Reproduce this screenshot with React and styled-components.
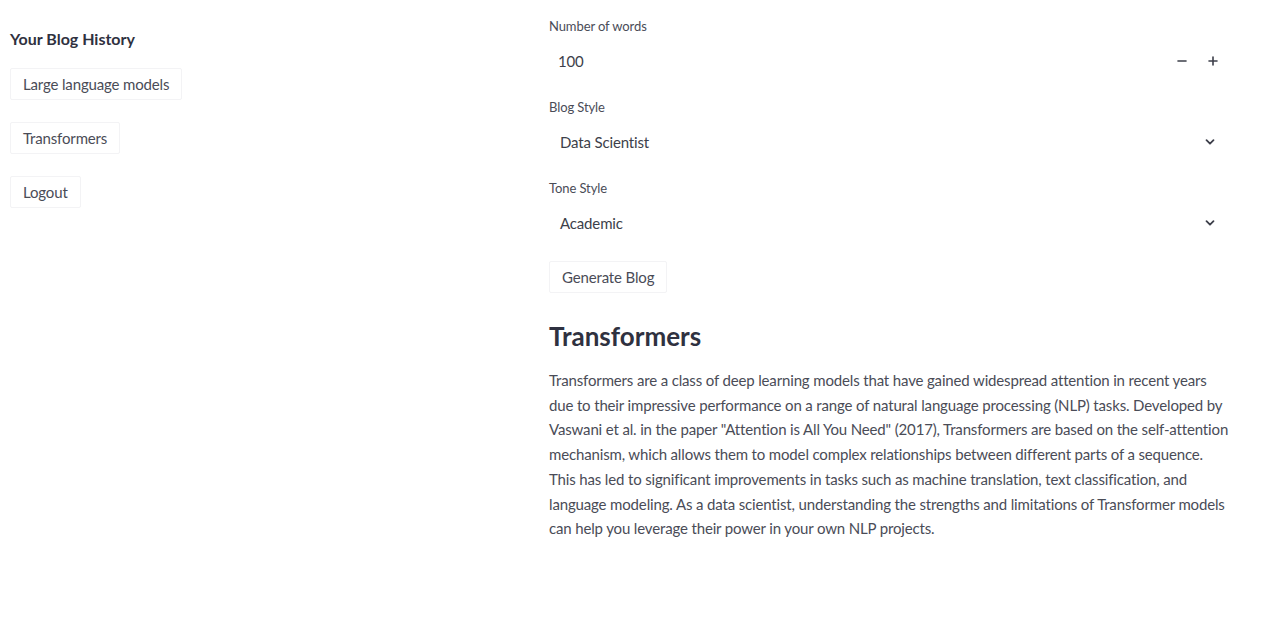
import React, { useState } from "react";
import styled, { createGlobalStyle } from "styled-components";

const GlobalStyle = createGlobalStyle`
  html, body {
    margin: 0;
    padding: 0;
    background: #ffffff;
  }
  body {
    font-family: Lato, "Noto Sans", sans-serif;
    color: #3d3f4a;
  }
`;

const history = ["Large language models", "Transformers", "Logout"];

const blogText =
  'Transformers are a class of deep learning models that have gained widespread attention in recent years due to their impressive performance on a range of natural language processing (NLP) tasks. Developed by Vaswani et al. in the paper "Attention is All You Need" (2017), Transformers are based on the self-attention mechanism, which allows them to model complex relationships between different parts of a sequence. This has led to significant improvements in tasks such as machine translation, text classification, and language modeling. As a data scientist, understanding the strengths and limitations of Transformer models can help you leverage their power in your own NLP projects.';

const Chevron = () => (
  <svg width="12" height="12" viewBox="0 0 12 12" fill="none">
    <path d="M2.5 4.2 6 7.7l3.5-3.5" stroke="#3d3f4a" strokeWidth="1.8" strokeLinecap="round" strokeLinejoin="round" />
  </svg>
);

const Minus = () => (
  <svg width="10" height="10" viewBox="0 0 10 10">
    <path d="M1 5h8" stroke="#3d3f4a" strokeWidth="1.6" strokeLinecap="round" />
  </svg>
);

const Plus = () => (
  <svg width="10" height="10" viewBox="0 0 10 10">
    <path d="M1 5h8M5 1v8" stroke="#3d3f4a" strokeWidth="1.6" strokeLinecap="round" />
  </svg>
);

const App = () => {
  const [words, setWords] = useState(100);

  return (
    <>
      <GlobalStyle />
      <Page>
        <Sidebar>
          <SideTitle>Your Blog History</SideTitle>
          <HistoryList>
            {history.map((item) => (
              <GhostButton key={item}>{item}</GhostButton>
            ))}
          </HistoryList>
        </Sidebar>

        <Main>
          <Field>
            <Label>Number of words</Label>
            <InputRow>
              <Value>{words}</Value>
              <Stepper>
                <StepButton aria-label="decrement" onClick={() => setWords(words - 1)}>
                  <Minus />
                </StepButton>
                <StepButton aria-label="increment" onClick={() => setWords(words + 1)}>
                  <Plus />
                </StepButton>
              </Stepper>
            </InputRow>
          </Field>

          <Field>
            <Label>Blog Style</Label>
            <SelectRow>
              <Value>Data Scientist</Value>
              <Chevron />
            </SelectRow>
          </Field>

          <Field>
            <Label>Tone Style</Label>
            <SelectRow>
              <Value>Academic</Value>
              <Chevron />
            </SelectRow>
          </Field>

          <GenerateButton>Generate Blog</GenerateButton>

          <BlogTitle>Transformers</BlogTitle>
          <BlogBody>{blogText}</BlogBody>
        </Main>
      </Page>
    </>
  );
};

const Page = styled.div`
  display: flex;
  width: 1280px;
  min-height: 621px;
`;

const Sidebar = styled.aside`
  width: 539px;
  padding: 29px 0 0 10px;
  box-sizing: border-box;
`;

const SideTitle = styled.h3`
  margin: 0 0 20px;
  font-size: 16px;
  font-weight: 700;
  color: #2f3140;
`;

const HistoryList = styled.div`
  display: flex;
  flex-direction: column;
  align-items: flex-start;
  gap: 22px;
`;

const GhostButton = styled.button`
  font-family: Lato, "Noto Sans", sans-serif;
  font-size: 15px;
  letter-spacing: -0.15px;
  color: #4a4c57;
  background: #fff;
  border: 1px solid #f3f3f5;
  border-radius: 2px;
  padding: 0 12px;
  height: 32px;
  cursor: pointer;
`;

const Main = styled.main`
  width: 690px;
  padding: 18px 0 0 10px;
  box-sizing: border-box;
  display: flex;
  flex-direction: column;
`;

const Field = styled.div`
  display: flex;
  flex-direction: column;
  width: 680px;
  margin-bottom: 19px;
`;

const Label = styled.label`
  font-size: 13px;
  letter-spacing: -0.1px;
  color: #4a4c57;
  line-height: 16px;
  margin-bottom: 8px;
`;

const InputRow = styled.div`
  display: flex;
  align-items: center;
  justify-content: space-between;
  height: 38px;
  padding: 0 6px 0 9px;
`;

const SelectRow = styled.div`
  display: flex;
  align-items: center;
  justify-content: space-between;
  height: 38px;
  padding: 0 13px 0 11px;
`;

const Value = styled.span`
  font-size: 15px;
  letter-spacing: -0.15px;
  color: #3d3f4a;
`;

const Stepper = styled.div`
  display: flex;
  align-items: center;
  gap: 11px;
`;

const StepButton = styled.button`
  display: flex;
  align-items: center;
  justify-content: center;
  border: none;
  background: none;
  width: 20px;
  height: 20px;
  padding: 0;
  cursor: pointer;
`;

const GenerateButton = styled.button`
  align-self: flex-start;
  font-family: Lato, "Noto Sans", sans-serif;
  font-size: 15px;
  letter-spacing: -0.15px;
  color: #4a4c57;
  background: #fff;
  border: 1px solid #f3f3f5;
  border-radius: 2px;
  height: 32px;
  padding: 0 12px;
  cursor: pointer;
`;

const BlogTitle = styled.h2`
  margin: 26px 0 15px;
  font-size: 26px;
  line-height: 34px;
  font-weight: 700;
  color: #2f3140;
`;

const BlogBody = styled.p`
  width: 680px;
  margin: 0;
  font-size: 15px;
  letter-spacing: -0.15px;
  line-height: 24.7px;
  color: #4a4c57;
`;

export default App;
